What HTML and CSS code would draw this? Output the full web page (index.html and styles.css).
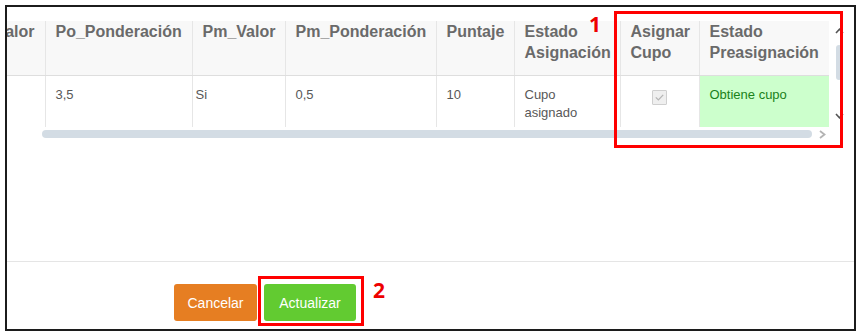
FILE: index.html
```html
<!DOCTYPE html>
<html lang="es">
<head>
<meta charset="utf-8">
<title>Asignación de cupos</title>
<link rel="stylesheet" href="styles.css">
</head>
<body>
<div class="frame">
  <div class="grid">
    <div class="grid-main">
      <div class="viewport">
        <table class="tbl">
          <colgroup>
            <col class="c1"><col class="c2"><col class="c3"><col class="c4"><col class="c5"><col class="c6"><col class="c7"><col class="c8">
          </colgroup>
          <thead>
            <tr>
              <th>Po_Valor</th>
              <th>Po_Ponderación</th>
              <th>Pm_Valor</th>
              <th>Pm_Ponderación</th>
              <th>Puntaje</th>
              <th>Estado Asignación</th>
              <th>Asignar Cupo</th>
              <th>Estado Preasignación</th>
            </tr>
          </thead>
          <tbody>
            <tr>
              <td></td>
              <td>3,5</td>
              <td class="shift">Si</td>
              <td>0,5</td>
              <td>10</td>
              <td>Cupo<br>asignado</td>
              <td class="center">
                <span class="chk"><svg width="9" height="7" viewBox="0 0 9 7"><path d="M0.8 3.4 L3.4 5.9 L8.2 0.9" fill="none" stroke="#b5b5b5" stroke-width="1.3"/></svg></span>
              </td>
              <td class="ok">Obtiene cupo</td>
            </tr>
          </tbody>
        </table>
      </div>
      <div class="hscroll">
        <div class="hthumb"></div>
        <svg class="harrow" width="7" height="9" viewBox="0 0 7 9"><path d="M1 1 L5.5 4.5 L1 8" fill="none" stroke="#b3b3b3" stroke-width="1.8"/></svg>
      </div>
    </div>
    <div class="vscroll">
      <svg class="varrow up" width="9" height="6" viewBox="0 0 9 6"><path d="M1 5 L4.5 1.2 L8 5" fill="none" stroke="#555" stroke-width="1.6"/></svg>
      <div class="vthumb"></div>
      <svg class="varrow down" width="9" height="6" viewBox="0 0 9 6"><path d="M1 1 L4.5 4.8 L8 1" fill="none" stroke="#555" stroke-width="1.6"/></svg>
    </div>
  </div>
  <div class="footer">
    <button class="btn btn-cancel" type="button">Cancelar</button>
    <button class="btn btn-update" type="button">Actualizar</button>
  </div>
</div>

<div class="mark mark-1"></div>
<span class="num num-1">1</span>
<div class="mark mark-2"></div>
<span class="num num-2">2</span>
</body>
</html>
```

FILE: styles.css
```css
html, body {
  margin: 0;
  padding: 0;
  background: #ffffff;
}

body {
  width: 860px;
  height: 334px;
  position: relative;
  font-family: "Liberation Sans", Arial, sans-serif;
}

.frame {
  margin: 5px 0 0 5px;
  width: 847px;
  height: 322px;
  border: 2px solid #1c1c1c;
  background: #ffffff;
  display: flex;
  flex-direction: column;
}

.grid {
  display: flex;
  margin-top: 14px;
}

.grid-main {
  width: 822px;
  display: flex;
  flex-direction: column;
}

.viewport {
  width: 822px;
  height: 106px;
  overflow: hidden;
}

.tbl {
  table-layout: fixed;
  border-collapse: collapse;
  width: 873px;
  margin-left: -51px;
}

.c1 { width: 89px; }
.c2 { width: 147px; }
.c3 { width: 93px; }
.c4 { width: 151px; }
.c5 { width: 78px; }
.c6 { width: 106px; }
.c7 { width: 79px; }
.c8 { width: 130px; }

.tbl th {
  background: #f8f8f8;
  color: #6a6a6a;
  font-weight: bold;
  font-size: 16px;
  line-height: 21px;
  text-align: left;
  vertical-align: top;
  padding: 0 10px 12px 10px;
  height: 42px;
  border-left: 1px solid #e6e6e6;
  border-bottom: 1px solid #dedede;
  white-space: normal;
}

.tbl th:first-child {
  border-left: none;
  white-space: nowrap;
}

.tbl td {
  color: #585858;
  font-size: 13px;
  line-height: 18px;
  text-align: left;
  vertical-align: top;
  padding: 10px 10px 10px 10px;
  border-left: 1px solid #e6e6e6;
}

.tbl td:first-child {
  border-left: none;
}

.tbl td.shift {
  padding-left: 3px;
}

.tbl td.center {
  text-align: center;
  padding-top: 14px;
}

.tbl td.ok {
  background: #ccffcc;
  color: #1a821a;
}

.chk {
  display: inline-flex;
  align-items: center;
  justify-content: center;
  width: 13px;
  height: 13px;
  border: 1px solid #cfcfcf;
  background: #efefef;
  border-radius: 1px;
  vertical-align: top;
}

.hscroll {
  height: 14px;
  display: flex;
  align-items: center;
  padding-left: 35px;
}

.hthumb {
  width: 770px;
  height: 8px;
  background: #d3dce4;
  border-radius: 4px;
}

.harrow {
  margin-left: 7px;
}

.vscroll {
  width: 16px;
  height: 106px;
  display: flex;
  flex-direction: column;
  align-items: center;
  padding-left: 4px;
  box-sizing: border-box;
}

.varrow.up {
  margin-top: 7px;
}

.vthumb {
  width: 6px;
  height: 35px;
  margin-top: 11px;
  background: #d3dce4;
  border-radius: 3px;
}

.varrow.down {
  margin-top: 33px;
}

.footer {
  margin-top: auto;
  height: 68px;
  border-top: 1px solid #e5e5e5;
  display: flex;
  align-items: flex-start;
  padding: 22px 0 0 167px;
  gap: 7px;
  box-sizing: border-box;
}

.btn {
  height: 37px;
  border: none;
  border-radius: 3px;
  color: #ffffff;
  font-family: "Liberation Sans", Arial, sans-serif;
  font-size: 14px;
  cursor: pointer;
}

.btn-cancel {
  width: 83px;
  background: #e67e22;
}

.btn-update {
  width: 92px;
  background: #62cb31;
}

.mark {
  position: absolute;
  border: 3px solid #ff0000;
  box-sizing: border-box;
}

.mark-1 {
  left: 614px;
  top: 11px;
  width: 229px;
  height: 137px;
}

.mark-2 {
  left: 258px;
  top: 276px;
  width: 106px;
  height: 50px;
}

.num {
  position: absolute;
  color: #ee0000;
  font-family: "Open Sans", "Liberation Sans", sans-serif;
  font-weight: bold;
  font-size: 21px;
  line-height: 21px;
}

.num-1 {
  left: 589px;
  top: 14px;
}

.num-2 {
  left: 373px;
  top: 280px;
}
```
